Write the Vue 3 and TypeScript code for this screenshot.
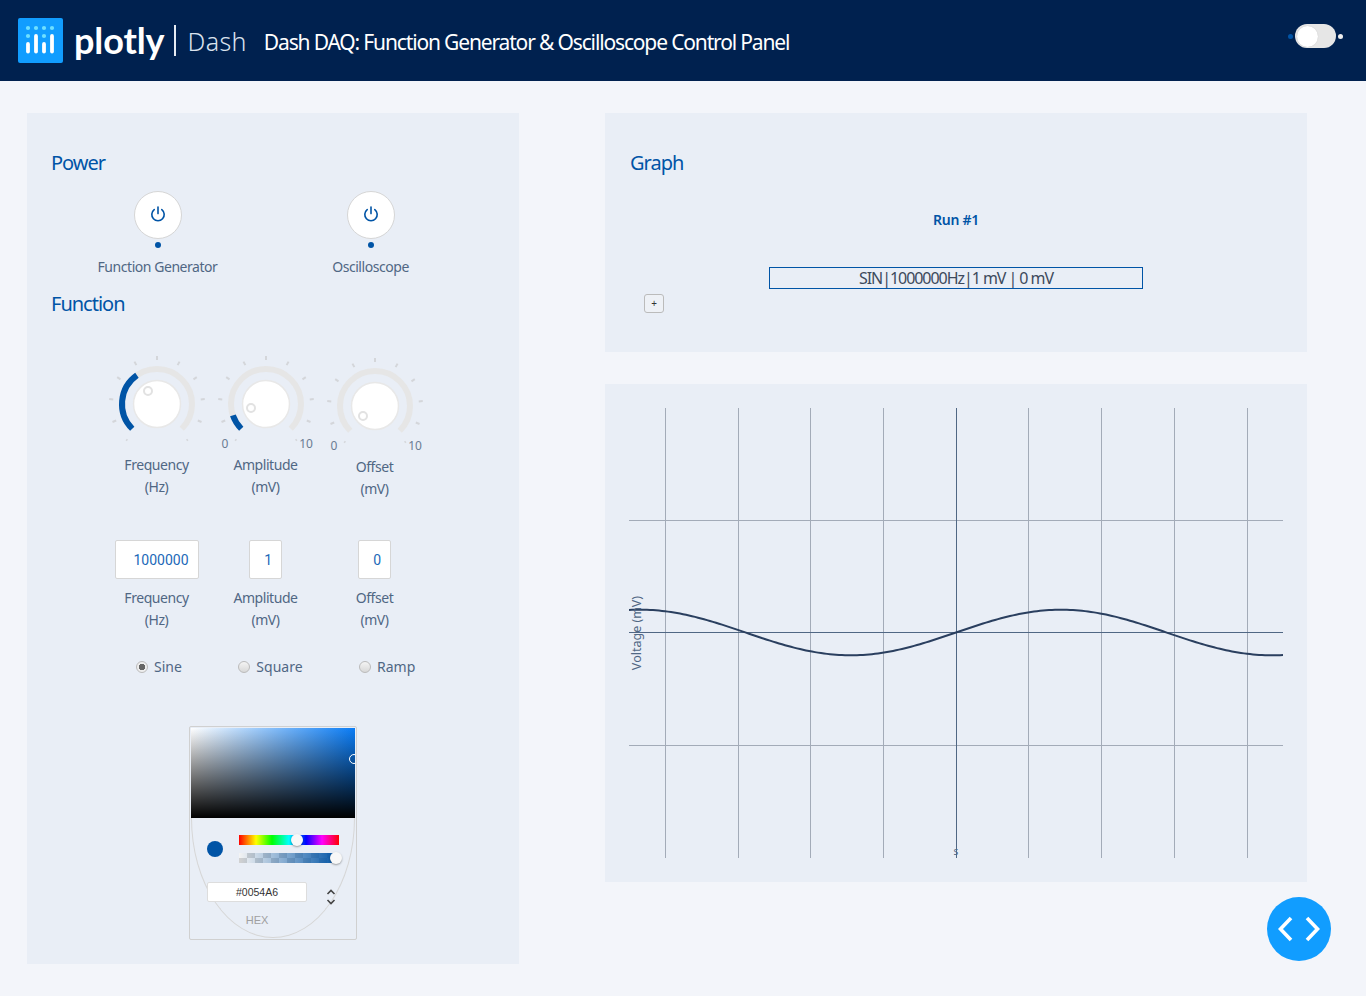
<template>
  <div class="page">
    <header class="banner">
      <svg class="logo" width="45" height="45" viewBox="0 0 45 45">
        <rect width="45" height="45" rx="2" fill="#119dff" />
        <circle v-for="d in logoDots" :key="d[0] + '-' + d[1]" :cx="d[0]" :cy="d[1]" r="2.1" fill="#6fe0ff" />
        <line v-for="b in logoBars" :key="b[0]" :x1="b[0]" :y1="b[1]" :x2="b[0]" y2="33.5" stroke="#fff" stroke-width="3.8" stroke-linecap="round" />
      </svg>
      <span class="brand">plotly</span>
      <span class="brand-sep"></span>
      <span class="brand-dash">Dash</span>
      <h1 class="title">Dash DAQ: Function Generator &amp; Oscilloscope Control Panel</h1>
      <div class="theme-toggle">
        <span class="led led-blue"></span>
        <span class="track"><span class="thumb"></span></span>
        <span class="led led-white"></span>
      </div>
    </header>

    <main class="content">
      <section class="panel left">
        <h2>Power</h2>
        <div class="power-row">
          <div v-for="p in powers" :key="p" class="power">
            <button class="power-btn">
              <svg width="18" height="18" viewBox="0 0 18 18" fill="none" stroke="#0054a6" stroke-width="1.6" stroke-linecap="round">
                <path d="M5.2 4.6a6.2 6.2 0 1 0 7.6 0" />
                <path d="M9 2v6.6" />
              </svg>
            </button>
            <span class="power-dot"></span>
            <span class="label">{{ p }}</span>
          </div>
        </div>

        <h2 class="fn-title">Function</h2>
        <div class="knob-row">
          <div v-for="k in knobs" :key="k.name" class="knob" :class="{ lower: k.name === 'Offset' }">
            <svg width="110" height="100" viewBox="0 0 110 100">
              <line
                v-for="(t, i) in ticks"
                :key="i"
                :x1="t.x1"
                :y1="t.y1"
                :x2="t.x2"
                :y2="t.y2"
                stroke="#d4d6da"
                :stroke-width="t.small ? 1.5 : 2"
              />
              <path :d="trackPath" fill="none" stroke="#e6e6e6" stroke-width="6" />
              <path v-if="k.end > -135" :d="arc(-135, k.end)" fill="none" stroke="#0054a6" stroke-width="6" />
              <circle cx="55" cy="50" r="23.5" fill="#fff" stroke="#e8e8e8" stroke-width="1.5" />
              <circle :cx="55 + k.dot[0]" :cy="50 + k.dot[1]" r="4" fill="#fff" stroke="#e2e2e2" stroke-width="2" />
              <template v-if="k.scale">
                <text class="scale" x="14" y="94" text-anchor="middle">0</text>
                <text class="scale" x="95" y="94" text-anchor="middle">10</text>
              </template>
            </svg>
            <span class="label">{{ k.name }}</span>
            <span class="label">{{ k.unit }}</span>
          </div>
        </div>

        <div class="display-row">
          <div v-for="k in knobs" :key="k.name" class="display-col">
            <div class="led-display" :class="{ wide: k.value.length > 1 }"><span>{{ k.value }}</span></div>
            <span class="label">{{ k.name }}</span>
            <span class="label">{{ k.unit }}</span>
          </div>
        </div>

        <div class="radio-row">
          <label v-for="(w, i) in waves" :key="w" class="radio">
            <span class="radio-mark" :class="{ on: i === 0 }"></span>{{ w }}
          </label>
        </div>

        <div class="picker">
          <div class="sat-box">
            <span class="sat-cursor"></span>
          </div>
          <div class="picker-body">
            <div class="slider-row">
              <span class="swatch"></span>
              <div class="sliders">
                <div class="hue"><span class="slider-thumb hue-thumb"></span></div>
                <div class="alpha"><span class="slider-thumb alpha-thumb"></span></div>
              </div>
            </div>
            <div class="hex-row">
              <div class="hex-input">#0054A6</div>
              <svg class="chev" width="12" height="20" viewBox="0 0 12 20" fill="none" stroke="#444" stroke-width="1.6">
                <path d="M2.5 7l3.5-3.5 3.5 3.5" />
                <path d="M2.5 13l3.5 3.5 3.5-3.5" />
              </svg>
            </div>
            <div class="hex-label">HEX</div>
          </div>
        </div>
      </section>

      <div class="right">
        <section class="panel graph-head">
          <h2>Graph</h2>
          <div class="run-title">Run #1</div>
          <div class="run-box">SIN|1000000Hz|1 mV | 0 mV</div>
          <button class="add-btn">+</button>
        </section>

        <section class="panel plot">
          <svg width="654" height="450" viewBox="0 0 654 450">
            <line v-for="x in gridX" :key="x" :x1="x" y1="0" :x2="x" y2="450" stroke="#a3abb8" stroke-width="1" />
            <line v-for="y in gridY" :key="y" x1="0" :y1="y" x2="654" :y2="y" stroke="#a3abb8" stroke-width="1" />
            <line x1="327.5" y1="0" x2="327.5" y2="450" stroke="#506784" stroke-width="1" />
            <line x1="0" y1="224.5" x2="654" y2="224.5" stroke="#506784" stroke-width="1" />
            <path :d="wavePath" fill="none" stroke="#2a3f5f" stroke-width="2" />
            <text class="axis" transform="translate(12 225) rotate(-90)" text-anchor="middle">Voltage (mV)</text>
            <text class="axis small" x="327" y="447" text-anchor="middle">s</text>
          </svg>
        </section>
      </div>
    </main>

    <button class="code-fab">
      <svg width="44" height="30" viewBox="0 0 44 30" fill="none" stroke="#fff" stroke-width="3.6">
        <path d="M14 4L3.5 15 14 26" />
        <path d="M30 4l10.5 11L30 26" />
      </svg>
    </button>
  </div>
</template>

<script setup lang="ts">
type Knob = {
  name: string
  unit: string
  value: string
  end: number
  dot: [number, number]
  scale: boolean
}

const logoDots = [
  [10, 10], [18, 10], [26, 10], [34, 10],
  [10, 18], [26, 18],
]
const logoBars = [
  [10, 26], [18, 18], [26, 26], [34, 18],
]

const powers = ['Function Generator', 'Oscilloscope']
const waves = ['Sine', 'Square', 'Ramp']

const knobs: Knob[] = [
  { name: 'Frequency', unit: '(Hz)', value: '1000000', end: -35, dot: [-9, -13], scale: false },
  { name: 'Amplitude', unit: '(mV)', value: '1', end: -109, dot: [-15, 4], scale: true },
  { name: 'Offset', unit: '(mV)', value: '0', end: -135, dot: [-12, 10], scale: true },
]

function polar(deg: number, r: number) {
  const a = (deg * Math.PI) / 180
  return { x: 55 + r * Math.sin(a), y: 50 - r * Math.cos(a) }
}

function arc(from: number, to: number) {
  const s = polar(from, 35)
  const e = polar(to, 35)
  const large = to - from > 180 ? 1 : 0
  return `M${s.x} ${s.y}A35 35 0 ${large} 1 ${e.x} ${e.y}`
}

const trackPath = arc(-135, 135)

const ticks = Array.from({ length: 11 }, (_, i) => {
  const deg = -140 + i * 28
  const small = i === 0 || i === 10
  const a = polar(deg, small ? 46 : 44)
  const b = polar(deg, 48)
  return { x1: a.x, y1: a.y, x2: b.x, y2: b.y, small }
})

// plot area starts at x=629, y=408 on the page
const gridX = [36.5, 109.5, 181.5, 254.5, 399.5, 472.5, 545.5, 618.5]
const gridY = [112.5, 337.5]

const wavePath = Array.from({ length: 219 }, (_, i) => {
  const x = i * 3
  const y = 224.5 - 22.8 * Math.sin((2 * Math.PI * (x - 327)) / 421)
  return `${i ? 'L' : 'M'}${x} ${y.toFixed(2)}`
}).join('')
</script>

<style>
body {
  background: #f3f5fa;
}
</style>

<style scoped>
.page {
  position: relative;
  width: 1366px;
  height: 996px;
  overflow: hidden;
  background: #f3f5fa;
  font-family: 'Noto Sans', sans-serif;
  color: #506784;
}

.banner {
  display: flex;
  align-items: center;
  height: 81px;
  padding-left: 18px;
  background: #00214f;
  color: #fff;
}

.brand {
  margin-left: 11px;
  font-family: Lato, sans-serif;
  font-size: 36px;
  font-weight: 700;
  line-height: 45px;
  letter-spacing: -0.1px;
}

.brand-sep {
  width: 2px;
  height: 31px;
  margin-left: 10px;
  background: #e6ebf2;
}

.brand-dash {
  margin-left: 11px;
  font-size: 25px;
  font-weight: 300;
  letter-spacing: 0.4px;
  color: #dbe3ee;
}

.title {
  margin: 2px 0 0 17px;
  font-size: 21px;
  font-weight: 400;
  letter-spacing: -1.15px;
}

.theme-toggle {
  display: flex;
  align-items: center;
  gap: 2px;
  margin: 0 23px 9px auto;
}

.led {
  width: 5px;
  height: 5px;
  border-radius: 50%;
}

.led-blue {
  background: #0054a6;
}

.led-white {
  background: #eee;
}

.track {
  display: block;
  width: 41px;
  height: 24px;
  padding: 1.5px;
  box-sizing: border-box;
  border-radius: 12px;
  background: #e6e6e6;
}

.thumb {
  display: block;
  width: 21px;
  height: 21px;
  border-radius: 50%;
  background: #fff;
  box-shadow: 0 0 1px #bbb;
}

.content {
  display: flex;
  gap: 86px;
  padding: 32px 0 0 27px;
}

.panel {
  background: #e9eef6;
  box-sizing: border-box;
}

.left {
  width: 492px;
  height: 851px;
  padding: 36px 0 0 24px;
}

h2 {
  margin: 0;
  font-size: 20px;
  font-weight: 400;
  line-height: 28px;
  letter-spacing: -1px;
  color: #0054a6;
}

.power-row {
  display: grid;
  grid-template-columns: 213px 213px;
  margin-top: 14px;
}

.power {
  display: flex;
  flex-direction: column;
  align-items: center;
}

.power-btn {
  display: flex;
  align-items: center;
  justify-content: center;
  width: 48px;
  height: 48px;
  padding: 0 0 2px;
  border: 1px solid #d6d6d6;
  border-radius: 50%;
  background: #fff;
}

.power-dot {
  width: 6px;
  height: 6px;
  margin-top: 3px;
  border-radius: 50%;
  background: #0054a6;
}

.label {
  display: block;
  font-size: 14px;
  line-height: 22px;
  letter-spacing: -0.45px;
  text-align: center;
  color: #506784;
}

.power .label {
  margin-top: 8px;
}

.fn-title {
  margin-top: 12px;
}

.knob-row {
  display: grid;
  grid-template-columns: repeat(3, 109px);
  margin: 36px 0 0 51px;
}

.knob {
  display: flex;
  flex-direction: column;
  align-items: center;
}

.knob.lower {
  margin-top: 2px;
}

.knob svg {
  display: block;
}

.scale {
  font-size: 12px;
  fill: #6b7c93;
}

.display-row {
  display: grid;
  grid-template-columns: repeat(3, 109px);
  margin: 40px 0 0 51px;
}

.display-col {
  display: flex;
  flex-direction: column;
  align-items: center;
}

.led-display {
  display: flex;
  align-items: center;
  justify-content: flex-end;
  width: 33px;
  height: 39px;
  box-sizing: border-box;
  padding-right: 9px;
  margin-bottom: 8px;
  border: 1px solid #d6d6d6;
  border-radius: 2px;
  background: #fff;
  font-family: Roboto, sans-serif;
  font-size: 14px;
  color: #1c69b8;
}

.led-display.wide {
  width: 84px;
}

.radio-row {
  display: flex;
  gap: 56.5px;
  margin: 25px 0 0 85px;
}

.radio {
  display: flex;
  align-items: center;
  gap: 6px;
  font-size: 14px;
  line-height: 22px;
  color: #506784;
}

.radio-mark {
  width: 12px;
  height: 12px;
  box-sizing: border-box;
  border: 1px solid #bbb;
  border-radius: 50%;
  background: linear-gradient(#f4f4f4, #d8d8d8);
}

.radio-mark.on {
  background: radial-gradient(circle, #666 0 3px, #eee 3.5px);
}

.picker {
  width: 168px;
  height: 214px;
  box-sizing: border-box;
  margin: 48px 0 0 138px;
  padding: 1px;
  border: 1px solid #d0d0d0;
  border-radius: 2px;
}

.sat-box {
  position: relative;
  height: 90px;
  overflow: hidden;
  background:
    linear-gradient(to bottom, transparent, #000),
    linear-gradient(to right, #fff, #0a7cf5);
}

.sat-cursor {
  position: absolute;
  left: 158px;
  top: 26px;
  width: 10px;
  height: 10px;
  box-sizing: border-box;
  border: 1px solid #fff;
  border-radius: 50%;
}

.picker-body {
  height: 120px;
  box-sizing: border-box;
  padding: 17px 0 0 15px;
  border: 1px solid #d6d6d6;
  border-top: none;
  border-radius: 0 0 82px 82px / 0 0 120px 120px;
}

.slider-row {
  display: flex;
  align-items: center;
  gap: 16px;
}

.swatch {
  width: 16px;
  height: 16px;
  border-radius: 50%;
  background: #0054a6;
}

.sliders {
  display: flex;
  flex-direction: column;
  gap: 8px;
  width: 100px;
}

.hue,
.alpha {
  position: relative;
  height: 10px;
}

.hue {
  background: linear-gradient(to right, #f00, #ff0 17%, #0f0 33%, #0ff 50%, #00f 67%, #f0f 83%, #f00);
}

.alpha {
  background:
    linear-gradient(to right, transparent, #0054a6),
    conic-gradient(#d2d2d2 25%, #f4f4f4 0 50%, #d2d2d2 0 75%, #f4f4f4 0) 0 0 / 16px 10px;
}

.slider-thumb {
  position: absolute;
  top: -1px;
  width: 12px;
  height: 12px;
  border-radius: 50%;
  background: #f8f8f8;
  box-shadow: 0 1px 2px rgba(0, 0, 0, 0.35);
}

.hue-thumb {
  left: 52px;
}

.alpha-thumb {
  left: 91px;
}

.hex-row {
  display: flex;
  align-items: center;
  margin-top: 14px;
}

.hex-input {
  width: 100px;
  height: 20px;
  box-sizing: border-box;
  border: 1px solid #ddd;
  border-radius: 2px;
  background: #fff;
  font-family: 'Liberation Sans', sans-serif;
  font-size: 10.5px;
  line-height: 18px;
  text-align: center;
  color: #333;
}

.chev {
  margin: 10px 0 0 18px;
}

.hex-label {
  width: 100px;
  margin-top: 7px;
  font-family: 'Liberation Sans', sans-serif;
  font-size: 11px;
  text-align: center;
  color: #a0a0a0;
}

.right {
  display: flex;
  flex-direction: column;
  gap: 32px;
  width: 702px;
}

.graph-head {
  display: flex;
  flex-direction: column;
  height: 239px;
  padding: 36px 25px 0;
}

.run-title {
  margin-top: 32px;
  font-size: 14px;
  font-weight: 600;
  line-height: 22px;
  letter-spacing: -0.3px;
  text-align: center;
  color: #0054a6;
}

.run-box {
  width: 374px;
  height: 22px;
  box-sizing: border-box;
  margin: 36px 0 0 139px;
  border: 1px solid #0054a6;
  font-size: 16px;
  line-height: 20px;
  letter-spacing: -1.05px;
  text-align: center;
  color: #3d4a5c;
}

.add-btn {
  display: block;
  width: 20px;
  height: 19px;
  margin: 5px 0 0 14px;
  padding: 0;
  border: 1px solid #bbb;
  border-radius: 3px;
  background: #eef1f6;
  font-family: 'Noto Sans', sans-serif;
  font-size: 10px;
  line-height: 15px;
  color: #333;
}

.plot {
  height: 498px;
  padding: 24px;
}

.plot svg {
  display: block;
}

.axis {
  font-size: 12.5px;
  fill: #506784;
}

.axis.small {
  font-size: 10px;
}

.code-fab {
  position: absolute;
  left: 1267px;
  top: 897px;
  display: flex;
  align-items: center;
  justify-content: center;
  width: 64px;
  height: 64px;
  padding: 0;
  border: none;
  border-radius: 50%;
  background: #119dff;
}
</style>
